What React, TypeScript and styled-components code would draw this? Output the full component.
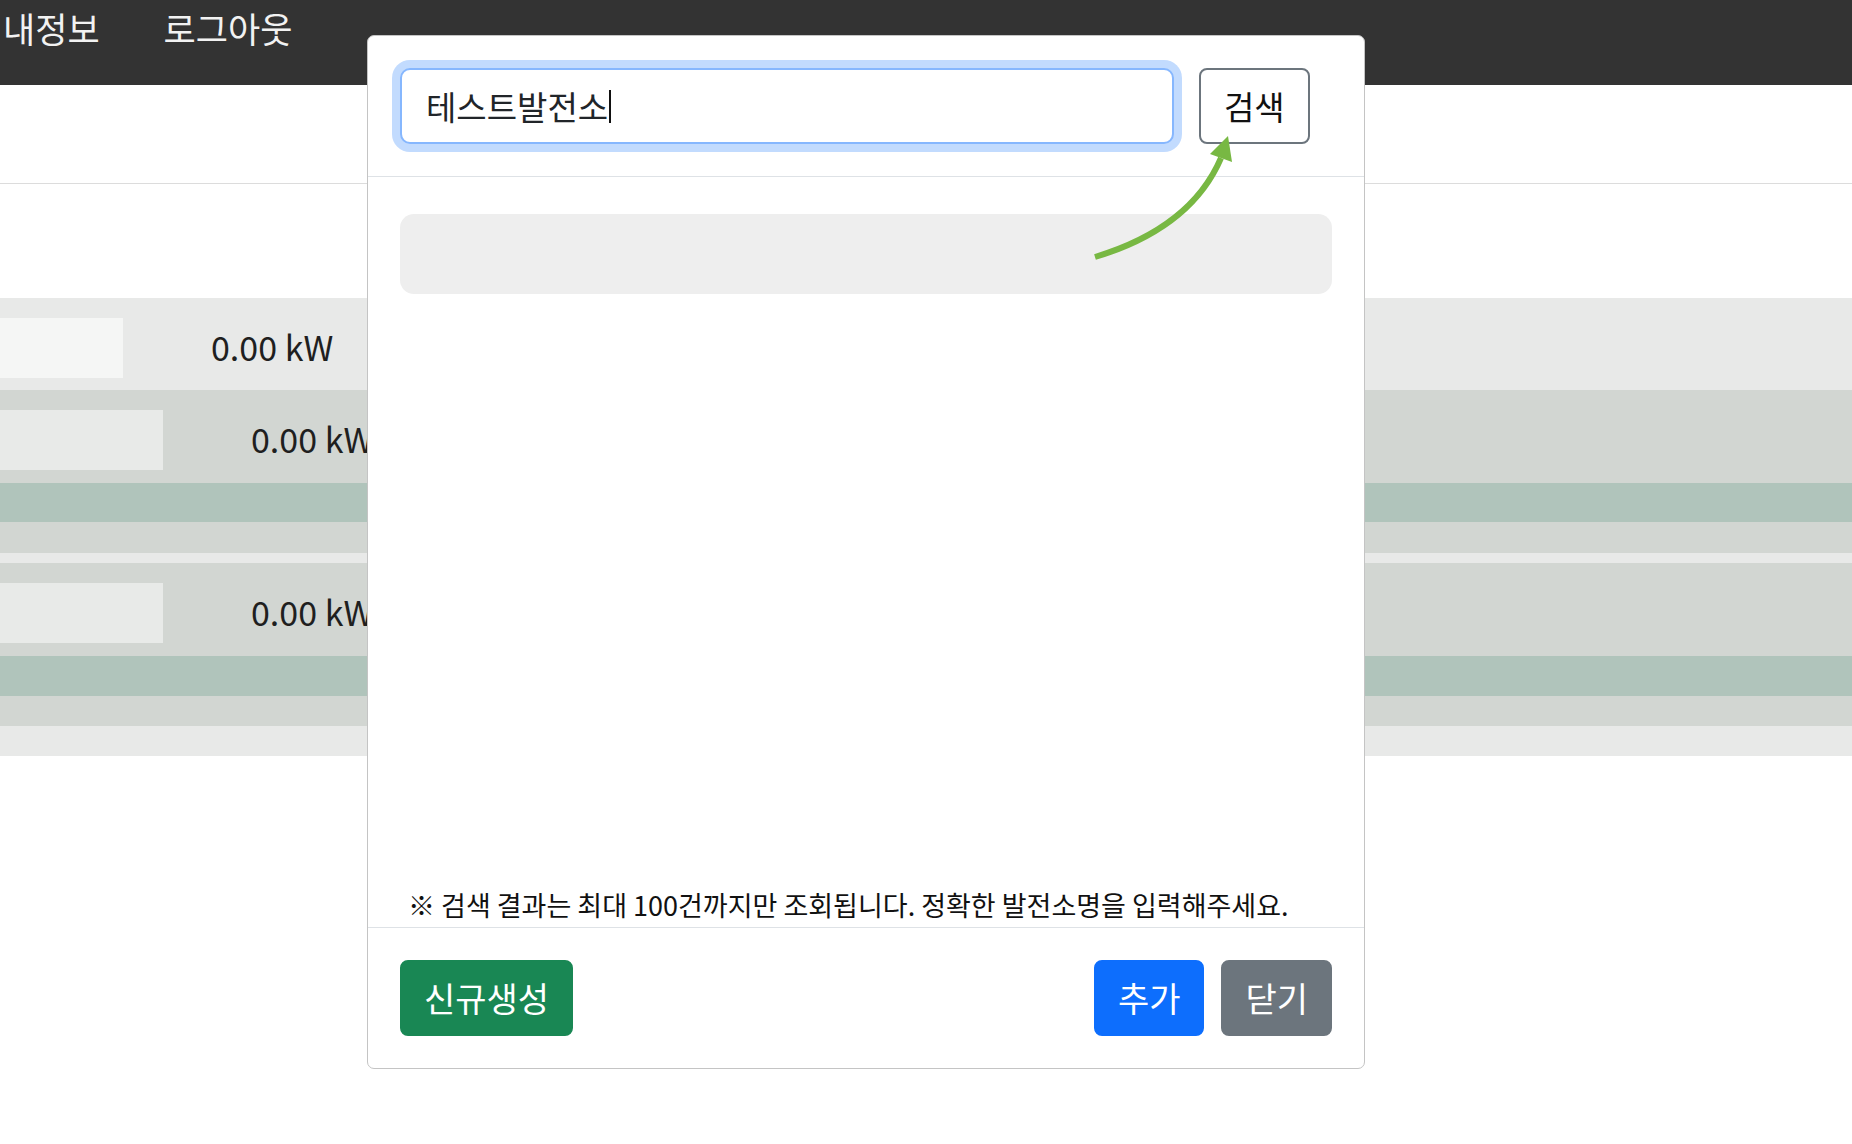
import React from "react";
import styled, { createGlobalStyle } from "styled-components";

const FONT = `"Noto Sans CJK KR", "Noto Sans", "Liberation Sans", sans-serif`;

const GlobalStyle = createGlobalStyle`
  html, body {
    margin: 0;
    padding: 0;
    background: #ffffff;
    overflow: hidden;
  }
  body {
    font-family: ${FONT};
    color: #212529;
  }
  * { box-sizing: border-box; }
`;

const Page = styled.div`
  position: relative;
  width: 1852px;
  height: 1144px;
  overflow: hidden;
  background: #ffffff;
`;

const NavBar = styled.nav`
  height: 85px;
  background: #333333;
  display: flex;
  align-items: flex-start;
  gap: 64px;
  padding: 4px 0 0 3px;
`;

const NavItem = styled.a`
  font-size: 35px;
  line-height: 48px;
  color: #f2f2f2;
  text-decoration: none;
  cursor: pointer;
`;

const SubHeader = styled.div`
  height: 99px;
  border-bottom: 1px solid #dcdcdc;
`;

const Table = styled.div`
  margin-top: 114px;
  display: flex;
  flex-direction: column;
`;

type Tone = "light" | "mid" | "green";
const toneColor: Record<Tone, string> = {
  light: "#e8e9e8",
  mid: "#d2d6d2",
  green: "#b0c4bb",
};

const Band = styled.div<{ $h: number; $tone: Tone }>`
  height: ${(p) => p.$h}px;
  background: ${(p) => toneColor[p.$tone]};
`;

const DataRow = styled.div<{ $h: number; $tone: Tone }>`
  height: ${(p) => p.$h}px;
  background: ${(p) => toneColor[p.$tone]};
  display: flex;
  align-items: flex-start;
  gap: 88px;
  padding-top: 20px;
`;

const FieldBox = styled.div<{ $w: number; $bg: string }>`
  width: ${(p) => p.$w}px;
  height: 60px;
  background: ${(p) => p.$bg};
  flex-shrink: 0;
`;

const Value = styled.span`
  font-size: 34px;
  line-height: 58px;
  color: #1f1f1f;
  white-space: nowrap;
`;

const Modal = styled.div`
  position: absolute;
  left: 367px;
  top: 35px;
  width: 998px;
  height: 1034px;
  background: #ffffff;
  border: 1px solid #c4c4c4;
  border-radius: 7px;
  display: flex;
  flex-direction: column;
`;

const ModalHeader = styled.div`
  height: 141px;
  padding: 32px 32px;
  display: flex;
  align-items: flex-start;
  gap: 25px;
  border-bottom: 1px solid #dee2e6;
`;

const SearchField = styled.div`
  width: 774px;
  height: 76px;
  border: 2px solid #86b7fe;
  border-radius: 10px;
  box-shadow: 0 0 0 8px #c2dbfe;
  padding-left: 24px;
  display: flex;
  align-items: center;
  font-size: 33px;
  color: #212529;
  background: #ffffff;
`;

const Caret = styled.span`
  display: inline-block;
  width: 2px;
  height: 33px;
  margin-left: 1px;
  background: #111111;
`;

const SearchButton = styled.button`
  height: 76px;
  padding: 0 23px;
  border: 2px solid #6c757d;
  border-radius: 8px;
  background: #ffffff;
  color: #111111;
  font-family: ${FONT};
  font-size: 33px;
  line-height: 1;
  cursor: pointer;
`;

const ModalBody = styled.div`
  flex: 1;
  padding: 37px 32px 2px;
  display: flex;
  flex-direction: column;
`;

const ResultBox = styled.div`
  height: 80px;
  background: #eeeeee;
  border-radius: 14px;
`;

const Note = styled.p`
  margin: auto 0 0;
  padding-left: 8px;
  font-size: 27px;
  line-height: 40px;
  color: #111111;
  white-space: nowrap;
`;

const ModalFooter = styled.div`
  border-top: 1px solid #dee2e6;
  padding: 32px;
  display: flex;
  justify-content: space-between;
  align-items: center;
`;

const ButtonGroup = styled.div`
  display: flex;
  gap: 17px;
`;

type Variant = "success" | "primary" | "secondary";
const variantColor: Record<Variant, string> = {
  success: "#198754",
  primary: "#0d6efd",
  secondary: "#6c757d",
};

const ActionButton = styled.button<{ $variant: Variant }>`
  height: 76px;
  padding: 0 22px;
  border: 2px solid ${(p) => variantColor[p.$variant]};
  border-radius: 8px;
  background: ${(p) => variantColor[p.$variant]};
  color: #ffffff;
  font-family: ${FONT};
  font-size: 34px;
  line-height: 1;
  cursor: pointer;
`;

const ArrowSvg = styled.svg`
  position: absolute;
  left: 1080px;
  top: 125px;
  width: 170px;
  height: 145px;
  pointer-events: none;
`;

export default function App() {
  return (
    <>
      <GlobalStyle />
      <Page>
        <NavBar>
          <NavItem>내정보</NavItem>
          <NavItem>로그아웃</NavItem>
        </NavBar>
        <SubHeader />
        <Table>
          <DataRow $h={92} $tone="light">
            <FieldBox $w={123} $bg="#f5f6f5" />
            <Value>0.00 kW</Value>
          </DataRow>
          <DataRow $h={93} $tone="mid">
            <FieldBox $w={163} $bg="#e8eae8" />
            <Value>0.00 kW</Value>
          </DataRow>
          <Band $h={39} $tone="green" />
          <Band $h={31} $tone="mid" />
          <Band $h={10} $tone="light" />
          <DataRow $h={93} $tone="mid">
            <FieldBox $w={163} $bg="#e8eae8" />
            <Value>0.00 kW</Value>
          </DataRow>
          <Band $h={40} $tone="green" />
          <Band $h={30} $tone="mid" />
          <Band $h={30} $tone="light" />
        </Table>

        <Modal role="dialog">
          <ModalHeader>
            <SearchField role="textbox">
              테스트발전소
              <Caret />
            </SearchField>
            <SearchButton>검색</SearchButton>
          </ModalHeader>
          <ModalBody>
            <ResultBox />
            <Note>※ 검색 결과는 최대 100건까지만 조회됩니다. 정확한 발전소명을 입력해주세요.</Note>
          </ModalBody>
          <ModalFooter>
            <ActionButton $variant="success">신규생성</ActionButton>
            <ButtonGroup>
              <ActionButton $variant="primary">추가</ActionButton>
              <ActionButton $variant="secondary">닫기</ActionButton>
            </ButtonGroup>
          </ModalFooter>
        </Modal>

        <ArrowSvg viewBox="0 0 170 145">
          <path d="M15 132 Q111 103 141 33" fill="none" stroke="#78b843" strokeWidth="6" />
          <polygon points="130,29 152,37 148,11" fill="#78b843" />
        </ArrowSvg>
      </Page>
    </>
  );
}
